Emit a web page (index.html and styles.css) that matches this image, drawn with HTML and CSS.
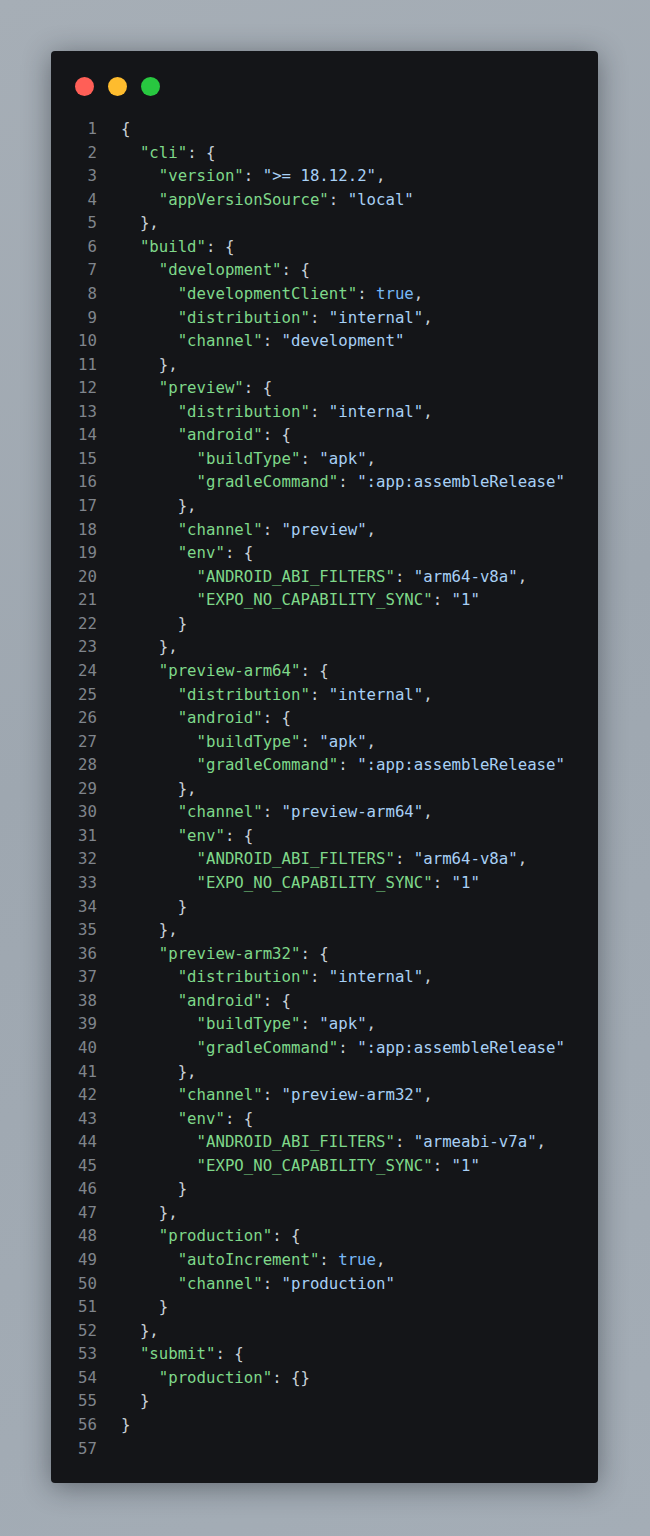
FILE: index.html
```html
<!DOCTYPE html>
<html>
<head>
<meta charset="utf-8">
<link rel="stylesheet" href="styles.css">
</head>
<body>
<div class="window">
  <div class="lights"><span class="dot red"></span><span class="dot yellow"></span><span class="dot green"></span></div>
  <div class="code">
<div class="ln"><span class="no">1</span><span class="tx"><span class="p">{</span></span></div>
<div class="ln"><span class="no">2</span><span class="tx">  <span class="k">"cli"</span><span class="p">: {</span></span></div>
<div class="ln"><span class="no">3</span><span class="tx">    <span class="k">"version"</span><span class="p">: </span><span class="s">"&gt;= 18.12.2"</span><span class="p">,</span></span></div>
<div class="ln"><span class="no">4</span><span class="tx">    <span class="k">"appVersionSource"</span><span class="p">: </span><span class="s">"local"</span></span></div>
<div class="ln"><span class="no">5</span><span class="tx">  <span class="p">},</span></span></div>
<div class="ln"><span class="no">6</span><span class="tx">  <span class="k">"build"</span><span class="p">: {</span></span></div>
<div class="ln"><span class="no">7</span><span class="tx">    <span class="k">"development"</span><span class="p">: {</span></span></div>
<div class="ln"><span class="no">8</span><span class="tx">      <span class="k">"developmentClient"</span><span class="p">: </span><span class="c">true</span><span class="p">,</span></span></div>
<div class="ln"><span class="no">9</span><span class="tx">      <span class="k">"distribution"</span><span class="p">: </span><span class="s">"internal"</span><span class="p">,</span></span></div>
<div class="ln"><span class="no">10</span><span class="tx">      <span class="k">"channel"</span><span class="p">: </span><span class="s">"development"</span></span></div>
<div class="ln"><span class="no">11</span><span class="tx">    <span class="p">},</span></span></div>
<div class="ln"><span class="no">12</span><span class="tx">    <span class="k">"preview"</span><span class="p">: {</span></span></div>
<div class="ln"><span class="no">13</span><span class="tx">      <span class="k">"distribution"</span><span class="p">: </span><span class="s">"internal"</span><span class="p">,</span></span></div>
<div class="ln"><span class="no">14</span><span class="tx">      <span class="k">"android"</span><span class="p">: {</span></span></div>
<div class="ln"><span class="no">15</span><span class="tx">        <span class="k">"buildType"</span><span class="p">: </span><span class="s">"apk"</span><span class="p">,</span></span></div>
<div class="ln"><span class="no">16</span><span class="tx">        <span class="k">"gradleCommand"</span><span class="p">: </span><span class="s">":app:assembleRelease"</span></span></div>
<div class="ln"><span class="no">17</span><span class="tx">      <span class="p">},</span></span></div>
<div class="ln"><span class="no">18</span><span class="tx">      <span class="k">"channel"</span><span class="p">: </span><span class="s">"preview"</span><span class="p">,</span></span></div>
<div class="ln"><span class="no">19</span><span class="tx">      <span class="k">"env"</span><span class="p">: {</span></span></div>
<div class="ln"><span class="no">20</span><span class="tx">        <span class="k">"ANDROID_ABI_FILTERS"</span><span class="p">: </span><span class="s">"arm64-v8a"</span><span class="p">,</span></span></div>
<div class="ln"><span class="no">21</span><span class="tx">        <span class="k">"EXPO_NO_CAPABILITY_SYNC"</span><span class="p">: </span><span class="s">"1"</span></span></div>
<div class="ln"><span class="no">22</span><span class="tx">      <span class="p">}</span></span></div>
<div class="ln"><span class="no">23</span><span class="tx">    <span class="p">},</span></span></div>
<div class="ln"><span class="no">24</span><span class="tx">    <span class="k">"preview-arm64"</span><span class="p">: {</span></span></div>
<div class="ln"><span class="no">25</span><span class="tx">      <span class="k">"distribution"</span><span class="p">: </span><span class="s">"internal"</span><span class="p">,</span></span></div>
<div class="ln"><span class="no">26</span><span class="tx">      <span class="k">"android"</span><span class="p">: {</span></span></div>
<div class="ln"><span class="no">27</span><span class="tx">        <span class="k">"buildType"</span><span class="p">: </span><span class="s">"apk"</span><span class="p">,</span></span></div>
<div class="ln"><span class="no">28</span><span class="tx">        <span class="k">"gradleCommand"</span><span class="p">: </span><span class="s">":app:assembleRelease"</span></span></div>
<div class="ln"><span class="no">29</span><span class="tx">      <span class="p">},</span></span></div>
<div class="ln"><span class="no">30</span><span class="tx">      <span class="k">"channel"</span><span class="p">: </span><span class="s">"preview-arm64"</span><span class="p">,</span></span></div>
<div class="ln"><span class="no">31</span><span class="tx">      <span class="k">"env"</span><span class="p">: {</span></span></div>
<div class="ln"><span class="no">32</span><span class="tx">        <span class="k">"ANDROID_ABI_FILTERS"</span><span class="p">: </span><span class="s">"arm64-v8a"</span><span class="p">,</span></span></div>
<div class="ln"><span class="no">33</span><span class="tx">        <span class="k">"EXPO_NO_CAPABILITY_SYNC"</span><span class="p">: </span><span class="s">"1"</span></span></div>
<div class="ln"><span class="no">34</span><span class="tx">      <span class="p">}</span></span></div>
<div class="ln"><span class="no">35</span><span class="tx">    <span class="p">},</span></span></div>
<div class="ln"><span class="no">36</span><span class="tx">    <span class="k">"preview-arm32"</span><span class="p">: {</span></span></div>
<div class="ln"><span class="no">37</span><span class="tx">      <span class="k">"distribution"</span><span class="p">: </span><span class="s">"internal"</span><span class="p">,</span></span></div>
<div class="ln"><span class="no">38</span><span class="tx">      <span class="k">"android"</span><span class="p">: {</span></span></div>
<div class="ln"><span class="no">39</span><span class="tx">        <span class="k">"buildType"</span><span class="p">: </span><span class="s">"apk"</span><span class="p">,</span></span></div>
<div class="ln"><span class="no">40</span><span class="tx">        <span class="k">"gradleCommand"</span><span class="p">: </span><span class="s">":app:assembleRelease"</span></span></div>
<div class="ln"><span class="no">41</span><span class="tx">      <span class="p">},</span></span></div>
<div class="ln"><span class="no">42</span><span class="tx">      <span class="k">"channel"</span><span class="p">: </span><span class="s">"preview-arm32"</span><span class="p">,</span></span></div>
<div class="ln"><span class="no">43</span><span class="tx">      <span class="k">"env"</span><span class="p">: {</span></span></div>
<div class="ln"><span class="no">44</span><span class="tx">        <span class="k">"ANDROID_ABI_FILTERS"</span><span class="p">: </span><span class="s">"armeabi-v7a"</span><span class="p">,</span></span></div>
<div class="ln"><span class="no">45</span><span class="tx">        <span class="k">"EXPO_NO_CAPABILITY_SYNC"</span><span class="p">: </span><span class="s">"1"</span></span></div>
<div class="ln"><span class="no">46</span><span class="tx">      <span class="p">}</span></span></div>
<div class="ln"><span class="no">47</span><span class="tx">    <span class="p">},</span></span></div>
<div class="ln"><span class="no">48</span><span class="tx">    <span class="k">"production"</span><span class="p">: {</span></span></div>
<div class="ln"><span class="no">49</span><span class="tx">      <span class="k">"autoIncrement"</span><span class="p">: </span><span class="c">true</span><span class="p">,</span></span></div>
<div class="ln"><span class="no">50</span><span class="tx">      <span class="k">"channel"</span><span class="p">: </span><span class="s">"production"</span></span></div>
<div class="ln"><span class="no">51</span><span class="tx">    <span class="p">}</span></span></div>
<div class="ln"><span class="no">52</span><span class="tx">  <span class="p">},</span></span></div>
<div class="ln"><span class="no">53</span><span class="tx">  <span class="k">"submit"</span><span class="p">: {</span></span></div>
<div class="ln"><span class="no">54</span><span class="tx">    <span class="k">"production"</span><span class="p">: {}</span></span></div>
<div class="ln"><span class="no">55</span><span class="tx">  <span class="p">}</span></span></div>
<div class="ln"><span class="no">56</span><span class="tx"><span class="p">}</span></span></div>
<div class="ln"><span class="no">57</span><span class="tx"></span></div>
  </div>
</div>
</body>
</html>
```

FILE: styles.css
```css
html, body {
  margin: 0;
  padding: 0;
}
body {
  width: 650px;
  height: 1536px;
  box-sizing: border-box;
  padding: 51px 52px 0 51px;
  background: linear-gradient(160deg, #a6aeb6 0%, #9ea7b0 45%, #a4adb6 100%);
  font-family: "DejaVu Sans Mono", "Liberation Mono", monospace;
}
.window {
  background: #141518;
  border-radius: 4px;
  box-shadow: 0 4px 28px rgba(20, 25, 30, 0.45);
  padding: 26px 24px 23px 24px;
}
.lights {
  display: flex;
  gap: 14px;
  height: 19px;
  margin-bottom: 21px;
}
.dot {
  width: 19px;
  height: 19px;
  border-radius: 50%;
}
.red { background: #ff5f57; }
.yellow { background: #febc2e; }
.green { background: #28c840; }
.code {
  font-size: 15.7px;
  line-height: 23.57px;
}
.ln {
  display: grid;
  grid-template-columns: 22px 1fr;
  column-gap: 24px;
  height: 23.57px;
}
.no {
  text-align: right;
  color: #80858c;
}
.tx {
  white-space: pre;
  color: #c9d1d9;
}
.k { color: #7fd88a; }
.s { color: #a8d0f5; }
.c { color: #79b8f5; }
.p { color: #c9d1d9; }
```
